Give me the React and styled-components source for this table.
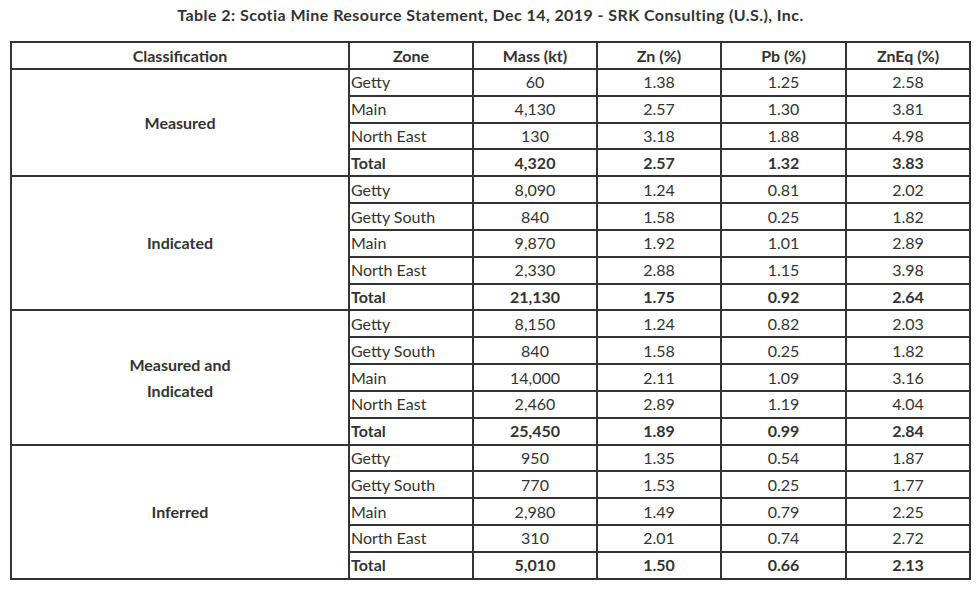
import React from 'react';
import styled, { createGlobalStyle } from 'styled-components';

const groups = [
  {
    name: 'Measured',
    rows: [
      ['Getty', '60', '1.38', '1.25', '2.58'],
      ['Main', '4,130', '2.57', '1.30', '3.81'],
      ['North East', '130', '3.18', '1.88', '4.98'],
      ['Total', '4,320', '2.57', '1.32', '3.83'],
    ],
  },
  {
    name: 'Indicated',
    rows: [
      ['Getty', '8,090', '1.24', '0.81', '2.02'],
      ['Getty South', '840', '1.58', '0.25', '1.82'],
      ['Main', '9,870', '1.92', '1.01', '2.89'],
      ['North East', '2,330', '2.88', '1.15', '3.98'],
      ['Total', '21,130', '1.75', '0.92', '2.64'],
    ],
  },
  {
    name: 'Measured and Indicated',
    rows: [
      ['Getty', '8,150', '1.24', '0.82', '2.03'],
      ['Getty South', '840', '1.58', '0.25', '1.82'],
      ['Main', '14,000', '2.11', '1.09', '3.16'],
      ['North East', '2,460', '2.89', '1.19', '4.04'],
      ['Total', '25,450', '1.89', '0.99', '2.84'],
    ],
  },
  {
    name: 'Inferred',
    rows: [
      ['Getty', '950', '1.35', '0.54', '1.87'],
      ['Getty South', '770', '1.53', '0.25', '1.77'],
      ['Main', '2,980', '1.49', '0.79', '2.25'],
      ['North East', '310', '2.01', '0.74', '2.72'],
      ['Total', '5,010', '1.50', '0.66', '2.13'],
    ],
  },
];

const widths = [338, 124, 124, 124, 125, 124];
const headers = ['Classification', 'Zone', 'Mass (kt)', 'Zn (%)', 'Pb (%)', 'ZnEq (%)'];

export default function App() {
  return (
    <>
      <GlobalStyle />
      <Page>
        <Title>Table 2: Scotia Mine Resource Statement, Dec 14, 2019 - SRK Consulting (U.S.), Inc.</Title>
        <Table>
          <colgroup>
            {widths.map((w, i) => (
              <col key={i} style={{ width: w }} />
            ))}
          </colgroup>
          <thead>
            <HeadRow>
              {headers.map((h) => (
                <HeadCell key={h}>{h}</HeadCell>
              ))}
            </HeadRow>
          </thead>
          <tbody>
            {groups.map((g) =>
              g.rows.map((r, i) => {
                const total = r[0] === 'Total';
                return (
                  <DataRow key={g.name + i}>
                    {i === 0 && <ClassCell rowSpan={g.rows.length}>{g.name}</ClassCell>}
                    <ZoneCell $bold={total}>{r[0]}</ZoneCell>
                    {r.slice(1).map((v, j) => (
                      <NumCell key={j} $bold={total}>{v}</NumCell>
                    ))}
                  </DataRow>
                );
              })
            )}
          </tbody>
        </Table>
      </Page>
    </>
  );
}

const GlobalStyle = createGlobalStyle`
  body {
    margin: 0;
    background: #fff;
    font-family: Lato, "Open Sans", sans-serif;
    color: #333;
  }
`;

const Page = styled.div`
  width: 980px;
  padding: 0 9px 0 10px;
  box-sizing: border-box;
`;

const Title = styled.div`
  height: 41px;
  box-sizing: border-box;
  padding-top: 4px;
  text-align: center;
  font-size: 16px;
  line-height: 22px;
  letter-spacing: 0.44px;
  font-weight: 700;
  color: #333;
`;

const Table = styled.table`
  width: 961px;
  table-layout: fixed;
  border-collapse: collapse;
  border: 2px solid #333;
  font-size: 16px;
  line-height: 20px;
  color: #333;
`;

const HeadRow = styled.tr`
  height: 27px;
`;

const DataRow = styled.tr`
  height: 26.84px;
`;

const cell = `
  border: 2px solid #333;
  padding: 0;
  vertical-align: middle;
`;

const HeadCell = styled.th`
  ${cell}
  text-align: center;
  font-weight: 700;
`;

const ClassCell = styled.td`
  ${cell}
  padding: 0 95px;
  text-align: center;
  font-weight: 700;
  line-height: 26px;
`;

const ZoneCell = styled.td`
  ${cell}
  padding-left: 1px;
  text-align: left;
  white-space: nowrap;
  font-weight: ${(p) => (p.$bold ? 700 : 400)};
`;

const NumCell = styled.td`
  ${cell}
  text-align: center;
  font-weight: ${(p) => (p.$bold ? 700 : 400)};
`;
